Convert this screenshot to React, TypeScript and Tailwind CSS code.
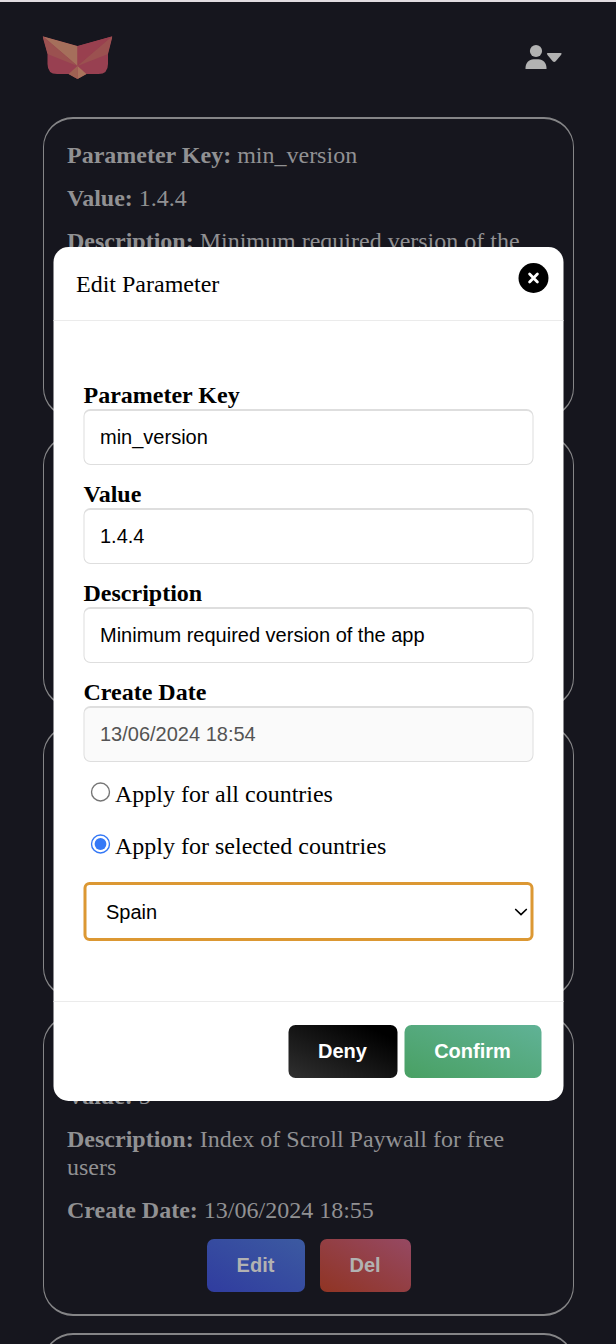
import type { ReactNode } from "react";

type Parameter = {
  key: string;
  value: string;
  description: string;
  date: string;
};

const parameters: Parameter[] = [
  { key: "min_version", value: "1.4.4", description: "Minimum required version of the app", date: "13/06/2024 18:54" },
  { key: "store_url", value: "1", description: "Link of the store", date: "13/06/2024 18:54" },
  { key: "pricing_tier", value: "t6", description: "Pricing tier of the user", date: "13/06/2024 18:54" },
  { key: "scroll", value: "5", description: "Index of Scroll Paywall for free users", date: "13/06/2024 18:55" },
];

function OwlLogo() {
  return (
    <svg className="h-[44px] w-[70px] translate-x-[0.5px]" viewBox="0 0 70 44" aria-hidden="true">
      <clipPath id="owl">
        <path d="M0 .2 35 10 70 .2 65.5 18V28Q65.5 38 56 38H44L35 43 26 38H14.5Q5 38 5 28V18Z" />
      </clipPath>
      <g clipPath="url(#owl)">
        <path fill="#984051" d="M0 0H70V44H0Z" />
        <path fill="#a56f5b" d="M0 0 35 10V30Z" />
        <path fill="#9b5150" d="M0 0 35 30 5 18Z" />
        <path fill="#99404f" d="M35 10 70 0 35 30Z" />
        <path fill="#9b5150" d="M70 0 65.5 18 35 30Z" />
        <path fill="#aa735c" d="M35 30 44.5 38.5 35 44Z" />
        <path fill="#9f6253" d="M35 30V44L25.5 38.5Z" />
      </g>
    </svg>
  );
}

function Line({ label, children }: { label: string; children: ReactNode }) {
  return (
    <p className="mb-[15px]">
      <b>{label}:</b> {children}
    </p>
  );
}

function ParameterCard({ item }: { item: Parameter }) {
  return (
    <article className="rounded-[30px] border-x border-y-2 border-[#858587] px-[23px] pt-[22px] pb-[22px]">
      <Line label="Parameter Key">{item.key}</Line>
      <Line label="Value">{item.value}</Line>
      <Line label="Description">{item.description}</Line>
      <Line label="Create Date">{item.date}</Line>
      <div className="flex justify-center gap-[15px] font-['Liberation_Sans',sans-serif] text-[20px] font-bold text-[#b2b2b2]">
        <button className="h-[53px] w-[98px] rounded-[7px] bg-[linear-gradient(to_top_right,#303c9f,#3c5aa1)] pb-[2px]">Edit</button>
        <button className="h-[53px] w-[91px] rounded-[7px] bg-[linear-gradient(to_top_right,#903423,#964963)] pb-[2px]">Del</button>
      </div>
    </article>
  );
}

function Field({ label, value, disabled = false }: { label: string; value: string; disabled?: boolean }) {
  return (
    <label className="mb-[15px] block">
      <b className="block h-[28px]">{label}</b>
      <input
        className="block h-[56px] w-full rounded-[7px] border-x border-t-2 border-b border-[#dedede] px-[15.5px] pb-px font-['Liberation_Sans',sans-serif] text-[20px] disabled:bg-[#fafafa] disabled:text-[#545454]"
        defaultValue={value}
        disabled={disabled}
      />
    </label>
  );
}

function Option({ label, checked = false }: { label: string; checked?: boolean }) {
  return (
    <div className="flex h-[28px] items-center gap-[4.5px]" role="radio" aria-checked={checked}>
      <svg className="-mt-[5px] size-[20px]" viewBox="0 0 20 20" aria-hidden="true">
        <circle cx="10" cy="10" r="9" fill="white" stroke={checked ? "#3478f6" : "#767676"} strokeWidth="1.4" />
        {checked && <circle cx="10" cy="10" r="5.9" fill="#3478f6" />}
      </svg>
      <span>{label}</span>
    </div>
  );
}

function EditDialog() {
  return (
    <div className="fixed inset-0 flex justify-center pt-[247px]">
      <section className="flex h-[854px] w-[510px] translate-x-[0.5px] flex-col rounded-[15px] bg-white text-black" role="dialog" aria-label="Edit Parameter">
        <header className="flex h-[74px] items-start justify-between border-b border-[#ebebeb] pl-[22.5px] pr-[15px]">
          <h2 className="mt-[23px]">Edit Parameter</h2>
          <button className="mt-[16px] flex size-[30px] items-center justify-center rounded-full bg-black" aria-label="Close">
            <svg className="size-[12px]" viewBox="0 0 12 12" fill="none" stroke="white" strokeWidth="2.8" strokeLinecap="round" aria-hidden="true">
              <path d="M2.1 2.1 9.9 9.9M9.9 2.1 2.1 9.9" />
            </svg>
          </button>
        </header>
        <div className="flex-1 pt-[60px] pr-[30px] pl-[30px]">
          <Field label="Parameter Key" value="min_version" />
          <Field label="Value" value="1.4.4" />
          <Field label="Description" value="Minimum required version of the app" />
          <Field label="Create Date" value="13/06/2024 18:54" disabled />
          <div className="mt-[18px] flex flex-col gap-[24px] pl-[7px]" role="radiogroup">
            <Option label="Apply for all countries" />
            <Option label="Apply for selected countries" checked />
          </div>
          <div className="mt-[22px] flex h-[59px] items-center justify-between rounded-[6px] border-3 border-[#dc9833] pl-[19.5px] pr-[3px] font-['Liberation_Sans',sans-serif] text-[20px]">
            <span>Spain</span>
            <svg className="mt-px h-[8px] w-[13px]" viewBox="0 0 13 8" fill="none" stroke="black" strokeWidth="1.7" aria-hidden="true">
              <path d="M.7 1 6.5 6.6 12.3 1" />
            </svg>
          </div>
        </div>
        <footer className="flex h-[100px] justify-end gap-[7px] border-t border-[#ebebeb] pt-[23px] pr-[22.5px] font-['Liberation_Sans',sans-serif] text-[20px] font-bold text-white">
          <button className="h-[53px] w-[109px] rounded-[7px] bg-[linear-gradient(to_top_right,#303030,#000_85%)] pb-[2px]">Deny</button>
          <button className="h-[53px] w-[137px] rounded-[7px] bg-[linear-gradient(to_top_right,#49a063,#60b296)] pb-[2px]">Confirm</button>
        </footer>
      </section>
    </div>
  );
}

export default function App() {
  return (
    <main className="h-[1344px] overflow-hidden border-t-2 border-[#e1dce0] bg-[#16161e] font-['Liberation_Serif',serif] text-[24px] leading-[28px] text-[#919193]">
      <nav className="flex h-[115px] items-start justify-between pt-[34px] pr-[54px] pl-[42px]">
        <OwlLogo />
        <svg className="mt-[8px] h-[26px] w-[37px]" viewBox="0 0 37 26" fill="#b2b2b2" aria-hidden="true">
          <circle cx="11" cy="7" r="6.1" />
          <path d="M.5 25V24C.5 19 4 15.2 8.5 15.2H13.5C18 15.2 21.5 19 21.5 24V25Z" />
          <path d="M23 9H35.5Q37.5 9 36 10.9L30.7 17.2Q29.2 18.8 27.7 17.2L22.5 10.9Q21 9 23 9Z" />
        </svg>
      </nav>
      <div className="mr-[42px] ml-[43px] flex flex-col gap-[17px]">
        {parameters.map((item) => (
          <ParameterCard key={item.key} item={item} />
        ))}
        <article className="h-[300px] rounded-[30px] border-x border-y-2 border-[#858587]" />
      </div>
      <EditDialog />
    </main>
  );
}
